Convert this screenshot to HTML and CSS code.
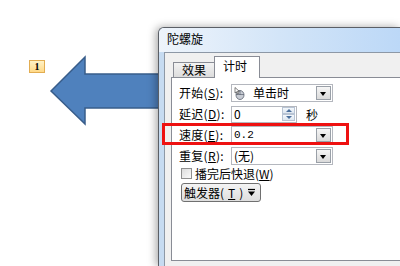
FILE: index.html
```html
<!DOCTYPE html>
<html lang="zh-CN">
<head>
  <meta charset="UTF-8" />
  <title>陀螺旋 - 计时</title>
  <link rel="stylesheet" href="styles.css">
</head>
<body>
  <div class="slide">
    <div class="badge">1</div>
    <svg class="arrow" width="170" height="140" viewBox="0 0 170 140">
      <polygon points="51,91 85,57 85,74 170,74 170,108 85,108 85,124"
               fill="#4f81bd" stroke="#385d8a" stroke-width="1.5" />
    </svg>

    <div class="dialog">
      <div class="titlebar">陀螺旋</div>
      <div class="client">
        <div class="tabs">
          <div class="tab">效果</div>
          <div class="tab active">计时</div>
        </div>
        <div class="panel">
          <div class="form">
            <label>开始(<u>S</u>):</label>
            <div class="combo">
              <span class="value">
                <svg class="mouse" width="11" height="13" viewBox="0 0 11 13">
                  <ellipse cx="6" cy="8" rx="4" ry="4.5" fill="#c8ccd4" stroke="#5a6270" stroke-width="0.8" />
                  <path d="M6 3.5 V8 M2 7.5 H10" stroke="#5a6270" stroke-width="0.7" />
                  <path d="M1 0.5 L1 6 L2.5 4.8 L3.6 7 L4.5 6.5 L3.5 4.4 L5.3 4.3 Z" fill="#fff" stroke="#333" stroke-width="0.6" />
                </svg>
                单击时
              </span>
              <span class="drop"></span>
            </div>

            <label>延迟(<u>D</u>):</label>
            <div class="delay">
              <div class="spin-input">
                <span class="value">0</span>
                <span class="spin">
                  <span class="up"></span>
                  <span class="down"></span>
                </span>
              </div>
              <span class="unit">秒</span>
            </div>

            <label>速度(<u>E</u>):</label>
            <div class="combo">
              <span class="value mono">0.2</span>
              <span class="drop"></span>
            </div>

            <label>重复(<u>R</u>):</label>
            <div class="combo">
              <span class="value">(无)</span>
              <span class="drop"></span>
            </div>
          </div>

          <div class="check-row">
            <span class="checkbox"></span>
            <span>播完后快退(<u>W</u>)</span>
          </div>

          <button class="trigger">触发器(<u>T</u>)
            <svg width="9" height="9" viewBox="0 0 9 9">
              <path d="M1 1.5 H8" stroke="#000" stroke-width="1.2" />
              <path d="M1 3.5 H8 L4.5 8 Z" fill="#000" />
            </svg>
          </button>
        </div>
      </div>
    </div>

    <div class="highlight"></div>
  </div>
</body>
</html>
```

FILE: styles.css
```css
html, body {
  margin: 0;
  padding: 0;
}
body {
  width: 400px;
  height: 266px;
  overflow: hidden;
  background: #fff;
  font-family: "Noto Sans CJK SC", "Liberation Sans", sans-serif;
  font-size: 12px;
  color: #000;
}
.slide {
  position: relative;
  width: 400px;
  height: 266px;
  padding: 27px 0 0 158px;
  box-sizing: border-box;
}
.badge {
  position: absolute;
  left: 29px;
  top: 60px;
  width: 14px;
  height: 11px;
  border: 1px solid #e2ad52;
  background: linear-gradient(#fff2c6, #ffd988);
  font-family: "Liberation Serif", serif;
  font-weight: bold;
  font-size: 10px;
  line-height: 11px;
  text-align: center;
}
.arrow {
  position: absolute;
  left: 0;
  top: 0;
}
/* window runs off the right and bottom edges of the shot */
.dialog {
  position: relative;
  width: 236px;
  height: 238px;
  border: 1px solid #5b5f66;
  border-right: none;
  border-bottom: none;
  border-radius: 6px 0 0 0;
  background: #c6dbf1;
  padding: 0 0 0 5px;
  box-shadow: -2px 0 8px rgba(0, 0, 0, 0.35);
}
.titlebar {
  height: 24px;
  line-height: 22px;
  margin-left: -5px;
  padding-left: 8px;
  background: linear-gradient(to right, #eef4fb, #d3e5f8 50%, #bcd8f7);
  border-radius: 5px 0 0 0;
}
.client {
  height: 209px;
  border-top: 1px solid #8d98a6;
  border-left: 1px solid #8d98a6;
  background: #f0f0f0;
  padding: 4px 0 0 6px;
}
.tabs {
  display: flex;
  align-items: flex-end;
  height: 20px;
  padding-left: 2px;
  position: relative;
  z-index: 1;
}
.tab {
  height: 14px;
  padding: 0 8px;
  line-height: 14px;
  border: 1px solid #898c95;
  border-bottom: none;
  background: linear-gradient(#f3f3f3, #dcdcdc);
}
.tab.active {
  height: 21px;
  line-height: 18px;
  padding: 0 12px 0 8px;
  margin-left: -1px;
  margin-bottom: -1px;
  background: #fff;
}
.panel {
  height: 176px;
  border: 1px solid #898c95;
  border-right: none;
  background: #fff;
  padding: 6px 0 0 7px;
}
.form {
  display: grid;
  grid-template-columns: 52px auto;
  grid-auto-rows: 18px;
  row-gap: 3px;
  align-items: center;
}
.form label {
  line-height: 18px;
  letter-spacing: 0.3px;
}
.combo {
  width: 100px;
  height: 16px;
  border: 1px solid #b4b7be;
  background: #fff;
  display: flex;
  align-items: center;
  justify-content: space-between;
}
.value {
  display: flex;
  align-items: center;
  gap: 8px;
  padding-left: 2px;
  line-height: 16px;
}
.mono {
  font-family: "Liberation Mono", monospace;
  font-size: 11px;
}
.mouse {
  display: block;
}
.drop {
  width: 13px;
  height: 12px;
  margin-right: 1px;
  border: 1px solid #9aa0a8;
  background: linear-gradient(#f6f6f6, #dadada);
  position: relative;
}
.drop::after {
  content: "";
  position: absolute;
  left: 3px;
  top: 5px;
  border-left: 3.5px solid transparent;
  border-right: 3.5px solid transparent;
  border-top: 4px solid #000;
}
.delay {
  display: flex;
  align-items: center;
  gap: 9px;
}
.spin-input {
  width: 64px;
  height: 15px;
  border: 1px solid #b4b7be;
  display: flex;
  justify-content: space-between;
  align-items: center;
}
.spin {
  display: flex;
  flex-direction: column;
  width: 13px;
  height: 14px;
  margin-right: 1px;
}
.spin span {
  flex: 1;
  border: 1px solid #b8c4d4;
  background: linear-gradient(#f4f8fc, #dde6f0);
  position: relative;
}
.spin .up::after,
.spin .down::after {
  content: "";
  position: absolute;
  left: 3px;
  top: 1px;
  border-left: 3px solid transparent;
  border-right: 3px solid transparent;
}
.spin .up::after {
  border-bottom: 3px solid #4a6f9c;
}
.spin .down::after {
  border-top: 3px solid #4a6f9c;
}
.check-row {
  display: flex;
  align-items: center;
  gap: 3px;
  margin: 1px 0 0 2px;
  height: 14px;
}
.checkbox {
  width: 9px;
  height: 9px;
  border: 1px solid #8f8f8f;
  background: linear-gradient(135deg, #dcdcdc, #fafafa);
}
.trigger {
  display: flex;
  align-items: center;
  gap: 4px;
  margin: 3px 0 0 2px;
  height: 19px;
  padding: 0 4px 0 2px;
  border: 1px solid #707070;
  border-radius: 3px;
  background: linear-gradient(#f4f4f4, #dedede);
  font-family: inherit;
  font-size: 12px;
  color: #000;
}
.highlight {
  position: absolute;
  left: 162px;
  top: 123px;
  width: 181px;
  height: 16px;
  border: 3px solid #ee1111;
}
```
